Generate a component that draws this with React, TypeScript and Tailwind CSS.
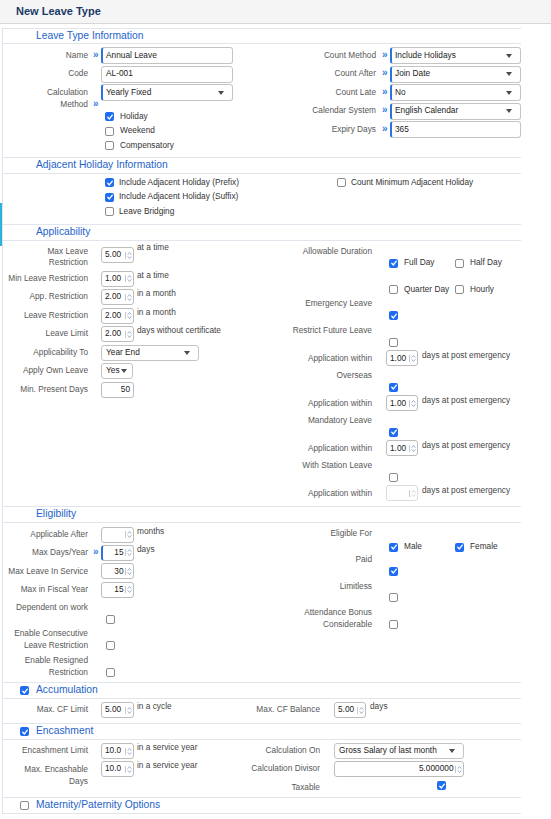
import React from "react";

const cx = (...a: Array<string | false | null | undefined>) => a.filter(Boolean).join(" ");

function Box({ on, className }: { on?: boolean; className?: string }) {
  if (on)
    return (
      <span className={cx("flex h-[9px] w-[9px] shrink-0 items-center justify-center rounded-[2px] bg-[#1d6cf2]", className)}>
        <svg viewBox="0 0 10 10" className="h-[8px] w-[8px]">
          <path d="M2.2 5.4 4.2 7.4 7.9 2.7" fill="none" stroke="#fff" strokeWidth="1.7" strokeLinecap="round" strokeLinejoin="round" />
        </svg>
      </span>
    );
  return <span className={cx("block h-[9px] w-[9px] shrink-0 rounded-[2px] border border-[#8c8c8c] bg-white", className)} />;
}

function Mark() {
  return <span className="text-[10px] font-bold leading-none text-[#2f7de6]">»</span>;
}

function Caret({ className }: { className?: string }) {
  return (
    <svg viewBox="0 0 6 4" className={cx("h-[4px] w-[6px] shrink-0", className)}>
      <path d="M0 0H6L3 4Z" fill="#4b4b4b" />
    </svg>
  );
}

function Spin({ faded }: { faded?: boolean }) {
  return (
    <svg viewBox="0 0 5 9" className="h-[9px] w-[5px] shrink-0">
      <path
        d="M0.9 3.4 2.5 1.5 4.1 3.4M0.9 5.6 2.5 7.5 4.1 5.6"
        fill="none"
        stroke={faded ? "#c6d0df" : "#8fa7cb"}
        strokeWidth="0.9"
        strokeLinecap="round"
        strokeLinejoin="round"
      />
    </svg>
  );
}

function Field({ value, req, select, className }: { value: string; req?: boolean; select?: boolean; className?: string }) {
  return (
    <div
      className={cx(
        "flex shrink-0 items-center rounded-[3px] border border-[#c4c4c4] bg-white pr-[8px] text-[#1b1b1b]",
        req ? "border-l-2 border-l-[#2c72e2] pl-[3px]" : "pl-[4px]",
        className
      )}
    >
      <span className="min-w-0 flex-1 whitespace-nowrap">{value}</span>
      {select && <Caret />}
    </div>
  );
}

function Num({
  value = "",
  right,
  req,
  disabled,
  plain,
  className,
}: {
  value?: string;
  right?: boolean;
  req?: boolean;
  disabled?: boolean;
  plain?: boolean;
  className?: string;
}) {
  return (
    <div
      className={cx(
        "flex shrink-0 items-center rounded-[3px] border bg-white",
        disabled ? "border-[#dcdcdc]" : "border-[#bcbcbc]",
        req ? "border-l-2 border-l-[#2c72e2] pl-[2px]" : "pl-[3px]",
        plain ? "pr-[3px]" : "pr-[1.5px]",
        className
      )}
    >
      <span className={cx("min-w-0 flex-1 whitespace-nowrap text-[#1b1b1b]", right && "text-right")}>{value}</span>
      {!plain && <span className="ml-[1px] mr-[1px] h-[7px] w-px shrink-0 bg-[#c8c8c8]" />}
      {!plain && <Spin faded={disabled} />}
    </div>
  );
}

function Heading({ children, first, check }: { children: React.ReactNode; first?: boolean; check?: "on" | "off" }) {
  return (
    <div
      className={cx(
        "flex h-[16px] items-center border-b border-[#e2e5ec] text-[10.3px] leading-none text-[#2563c9]",
        first && "border-t",
        check ? "pl-[17px]" : "pl-[33px]"
      )}
    >
      {check && <Box on={check === "on"} className="mr-[7px]" />}
      <span>{children}</span>
    </div>
  );
}

function Opt({ on, label }: { on?: boolean; label: string }) {
  return (
    <div className="flex w-[66px] items-center">
      <Box on={on} />
      <span className="ml-[6px] whitespace-nowrap text-[#333]">{label}</span>
    </div>
  );
}

/* label on the first line, checkbox on the second (left form column) */
function LeftCheckRow({ label, on }: { label: React.ReactNode; on?: boolean }) {
  return (
    <div className="flex h-[26.5px]">
      <div className="w-[85px] whitespace-nowrap text-right">{label}</div>
      <div className="w-[13px]" />
      <div className="pl-[5px] pt-[12.9px]">
        <Box on={on} />
      </div>
    </div>
  );
}

/* label on the first line, checkbox on the second (right form column) */
function RightCheckRow({ label, on, tall, children }: { label: React.ReactNode; on?: boolean; tall?: boolean; children?: React.ReactNode }) {
  return (
    <div className={cx("flex", tall ? "h-[26.5px]" : "h-[24px]")}>
      <div className="w-[86px] whitespace-nowrap text-right">{label}</div>
      <div className="w-[14px]" />
      <div className="flex pl-[3px] pt-[12.9px]">{children ?? <Box on={on} />}</div>
    </div>
  );
}

function AppWithin({ value, disabled }: { value?: string; disabled?: boolean }) {
  return (
    <div className="flex h-[21px] items-center pb-[2px]">
      <div className="w-[86px] whitespace-nowrap text-right">Application within</div>
      <div className="w-[14px]" />
      <Num value={value} disabled={disabled} className="h-[16px] w-[32px]" />
      <span className="ml-[4px] mt-[1px] self-start whitespace-nowrap leading-[10px] text-[#444]">days at post emergency</span>
    </div>
  );
}

function NumRow({
  label,
  value,
  suffix,
  right,
  req,
  h = "h-[18.5px]",
}: {
  label: string;
  value?: string;
  suffix?: string;
  right?: boolean;
  req?: boolean;
  h?: string;
}) {
  return (
    <div className={cx("flex items-center", h)}>
      <div className="w-[85px] whitespace-nowrap text-right">{label}</div>
      <div className="w-[13px] pl-[5px]">{req && <Mark />}</div>
      <Num value={value} right={right} req={req} className="h-[16px] w-[33px]" />
      {suffix && <span className="ml-[3px] self-start whitespace-nowrap leading-[10px] text-[#444]">{suffix}</span>}
    </div>
  );
}

export default function App() {
  const line = "border-b border-[#e2e5ec]";
  return (
    <div className="relative min-h-[819px] w-[551px] overflow-hidden bg-white font-['Liberation_Sans',Arial,sans-serif] text-[8.3px] leading-[11.6px] text-[#585858]">
      <div className="flex h-[24px] items-center border-b border-[#d5d7db] bg-[#f5f5f6] pl-[16px] text-[11px] font-bold text-[#1b3a66]">
        New Leave Type
      </div>

      <div className="ml-[2px] mt-[4px] w-[519px] border-l border-[#dde1e8]">
        {/* Leave type information */}
        <Heading first>Leave Type Information</Heading>
        <div className={cx("flex h-[114px]", line)}>
          <div className="w-[287px] pt-[2.5px]">
            <div className="flex h-[18.5px] items-center">
              <div className="w-[85px] text-right">Name</div>
              <div className="w-[13px] pl-[5px]">
                <Mark />
              </div>
              <Field req value="Annual Leave" className="h-[17px] w-[132px]" />
            </div>
            <div className="flex h-[18.5px] items-center">
              <div className="w-[85px] text-right">Code</div>
              <div className="w-[13px]" />
              <Field value="AL-001" className="h-[17px] w-[132px]" />
            </div>
            <div className="flex h-[18.5px] items-center">
              <div className="mt-[2.15px] w-[85px] self-start text-right leading-[12.7px]">
                Calculation
                <br />
                Method
              </div>
              <div className="mt-[14.85px] w-[13px] self-start pl-[5px] leading-[12.7px]">
                <Mark />
              </div>
              <Field req select value="Yearly Fixed" className="h-[17px] w-[132px]" />
            </div>
            <div className="mt-[7.5px] pl-[102px]">
              <div className="flex h-[14.5px] items-center">
                <Box on />
                <span className="ml-[6px] text-[#333]">Holiday</span>
              </div>
              <div className="flex h-[14.5px] items-center">
                <Box />
                <span className="ml-[6px] text-[#333]">Weekend</span>
              </div>
              <div className="flex h-[14.5px] items-center">
                <Box />
                <span className="ml-[6px] text-[#333]">Compensatory</span>
              </div>
            </div>
          </div>
          <div className="flex-1 pt-[2.5px]">
            {[
              ["Count Method", "Include Holidays", true],
              ["Count After", "Join Date", true],
              ["Count Late", "No", true],
              ["Calendar System", "English Calendar", true],
              ["Expiry Days", "365", false],
            ].map(([l, v, s]) => (
              <div key={l as string} className="flex h-[18.5px] items-center">
                <div className="w-[86px] whitespace-nowrap text-right">{l}</div>
                <div className="w-[14px] pl-[6px]">
                  <Mark />
                </div>
                <Field req select={s as boolean} value={v as string} className="h-[17px] w-[131px]" />
              </div>
            ))}
          </div>
        </div>

        {/* Adjacent holiday */}
        <Heading>Adjacent Holiday Information</Heading>
        <div className={cx("flex h-[51px] pl-[102px] pt-[1.85px]", line)}>
          <div className="w-[232px]">
            <div className="flex h-[14.3px] items-center">
              <Box on />
              <span className="ml-[5px] text-[#333]">Include Adjacent Holiday (Prefix)</span>
            </div>
            <div className="flex h-[14.3px] items-center">
              <Box on />
              <span className="ml-[5px] text-[#333]">Include Adjacent Holiday (Suffix)</span>
            </div>
            <div className="flex h-[14.3px] items-center">
              <Box />
              <span className="ml-[5px] text-[#333]">Leave Bridging</span>
            </div>
          </div>
          <div>
            <div className="flex h-[14.3px] items-center">
              <Box />
              <span className="ml-[5px] text-[#333]">Count Minimum Adjacent Holiday</span>
            </div>
          </div>
        </div>

        {/* Applicability */}
        <Heading>Applicability</Heading>
        <div className={cx("flex h-[266px]", line)}>
          <div className="w-[287px]">
            <div className="flex h-[28.5px]">
              <div className="mt-[4.9px] w-[85px] text-right">
                Max Leave
                <br />
                Restriction
              </div>
              <div className="w-[13px]" />
              <Num value="5.00" className="h-[16px] w-[33px] self-center" />
              <span className="ml-[3px] mt-[0.7px] whitespace-nowrap leading-[10px] text-[#444]">at a time</span>
            </div>
            <NumRow label="Min Leave Restriction" value="1.00" suffix="at a time" />
            <NumRow label="App. Restriction" value="2.00" suffix="in a month" />
            <NumRow label="Leave Restriction" value="2.00" suffix="in a month" />
            <NumRow label="Leave Limit" value="2.00" suffix="days without certificate" />
            <div className="flex h-[18.5px] items-center">
              <div className="w-[85px] text-right">Applicability To</div>
              <div className="w-[13px]" />
              <Field select value="Year End" className="h-[16px] w-[98px]" />
            </div>
            <div className="flex h-[18.5px] items-center">
              <div className="w-[85px] text-right">Apply Own Leave</div>
              <div className="w-[13px]" />
              <div className="flex h-[16px] w-[32px] items-center rounded-[3px] border border-[#c4c4c4] bg-white pl-[4px] text-[#1b1b1b]">
                <span>Yes</span>
                <Caret className="ml-[1px]" />
              </div>
            </div>
            <div className="flex h-[18.5px] items-center">
              <div className="w-[85px] text-right">Min. Present Days</div>
              <div className="w-[13px]" />
              <Num plain right value="50" className="h-[16px] w-[33px]" />
            </div>
          </div>
          <div className="flex-1">
            <div className="mt-[4.9px] flex h-[11.6px] items-center">
              <div className="w-[86px] text-right">Allowable Duration</div>
            </div>
            <div className="flex h-[11.6px] items-center pl-[103px]">
              <Opt on label="Full Day" />
              <Opt label="Half Day" />
            </div>
            <div className="mt-[15.1px] flex h-[11.6px] items-center pl-[103px]">
              <Opt label="Quarter Day" />
              <Opt label="Hourly" />
            </div>
            <div className="mt-[2.7px]">
              <RightCheckRow tall label="Emergency Leave" on />
            </div>
            <RightCheckRow label="Restrict Future Leave" />
            <AppWithin value="1.00" />
            <RightCheckRow label="Overseas" on />
            <AppWithin value="1.00" />
            <RightCheckRow label="Mandatory Leave" on />
            <AppWithin value="1.00" />
            <RightCheckRow label="With Station Leave" />
            <AppWithin disabled />
          </div>
        </div>

        {/* Eligibility */}
        <Heading>Eligibility</Heading>
        <div className={cx("flex h-[160px]", line)}>
          <div className="w-[287px] pt-[2.5px]">
            <NumRow h="h-[18.33px]" label="Applicable After" suffix="months" />
            <NumRow h="h-[18.33px]" label="Max Days/Year" value="15" right req suffix="days" />
            <NumRow h="h-[18.33px]" label="Max Leave In Service" value="30" right />
            <NumRow h="h-[18.33px]" label="Max in Fiscal Year" value="15" right />
            <div className="mt-[3.1px]">
              <LeftCheckRow label="Dependent on work" />
              <LeftCheckRow
                label={
                  <>
                    Enable Consecutive
                    <br />
                    Leave Restriction
                  </>
                }
              />
              <LeftCheckRow
                label={
                  <>
                    Enable Resigned
                    <br />
                    Restriction
                  </>
                }
              />
            </div>
          </div>
          <div className="flex-1 pt-[4.5px]">
            <RightCheckRow tall label="Eligible For">
              <Opt on label="Male" />
              <Opt on label="Female" />
            </RightCheckRow>
            <RightCheckRow tall label="Paid" on />
            <RightCheckRow tall label="Limitless" />
            <RightCheckRow
              tall
              label={
                <>
                  Attendance Bonus
                  <br />
                  Considerable
                </>
              }
            />
          </div>
        </div>

        {/* Accumulation */}
        <Heading check="on">Accumulation</Heading>
        <div className={cx("flex h-[25px] items-center pb-[1.5px]", line)}>
          <div className="flex w-[227px] items-center self-stretch">
            <div className="w-[85px] text-right">Max. CF Limit</div>
            <div className="w-[13px]" />
            <Num value="5.00" className="h-[16px] w-[33px]" />
            <span className="ml-[3px] mt-[2px] self-start whitespace-nowrap leading-[10px] text-[#444]">in a cycle</span>
          </div>
          <div className="w-[90px] whitespace-nowrap text-right">Max. CF Balance</div>
          <div className="w-[14px]" />
          <Num value="5.00" className="h-[16px] w-[32px]" />
          <span className="ml-[4px] mt-[2px] self-start whitespace-nowrap leading-[10px] text-[#444]">days</span>
        </div>

        {/* Encashment */}
        <Heading check="on">Encashment</Heading>
        <div className={cx("h-[58px] pt-[2px]", line)}>
          <div className="flex h-[18px] items-center">
            <div className="flex w-[227px] items-center self-stretch">
              <div className="w-[85px] text-right">Encashment Limit</div>
              <div className="w-[13px]" />
              <Num value="10.0" className="h-[16px] w-[33px]" />
              <span className="ml-[3px] self-start whitespace-nowrap leading-[10px] text-[#444]">in a service year</span>
            </div>
            <div className="w-[90px] whitespace-nowrap text-right">Calculation On</div>
            <div className="w-[14px]" />
            <Field select value="Gross Salary of last month" className="h-[16px] w-[130px]" />
          </div>
          <div className="flex h-[18.5px] items-center">
            <div className="flex w-[227px] items-center self-stretch">
              <div className="mt-[3.3px] w-[85px] self-start text-right leading-[12px]">
                Max. Encashable
                <br />
                Days
              </div>
              <div className="w-[13px]" />
              <Num value="10.0" className="h-[16px] w-[33px]" />
              <span className="ml-[3px] self-start whitespace-nowrap leading-[10px] text-[#444]">in a service year</span>
            </div>
            <div className="w-[90px] whitespace-nowrap text-right">Calculation Divisor</div>
            <div className="w-[14px]" />
            <Num right value="5.000000" className="h-[16px] w-[130px]" />
          </div>
          <div className="flex h-[18.5px] items-center">
            <div className="w-[227px]" />
            <div className="w-[90px] text-right">Taxable</div>
            <div className="w-[14px]" />
            <Box on className="ml-[103px] -mt-[4px]" />
          </div>
        </div>

        {/* Maternity / paternity */}
        <Heading check="off">Maternity/Paternity Options</Heading>
      </div>

      <div className="absolute left-0 top-[203px] h-[43px] w-[2px] bg-[#2bb3d9]" />
    </div>
  );
}
